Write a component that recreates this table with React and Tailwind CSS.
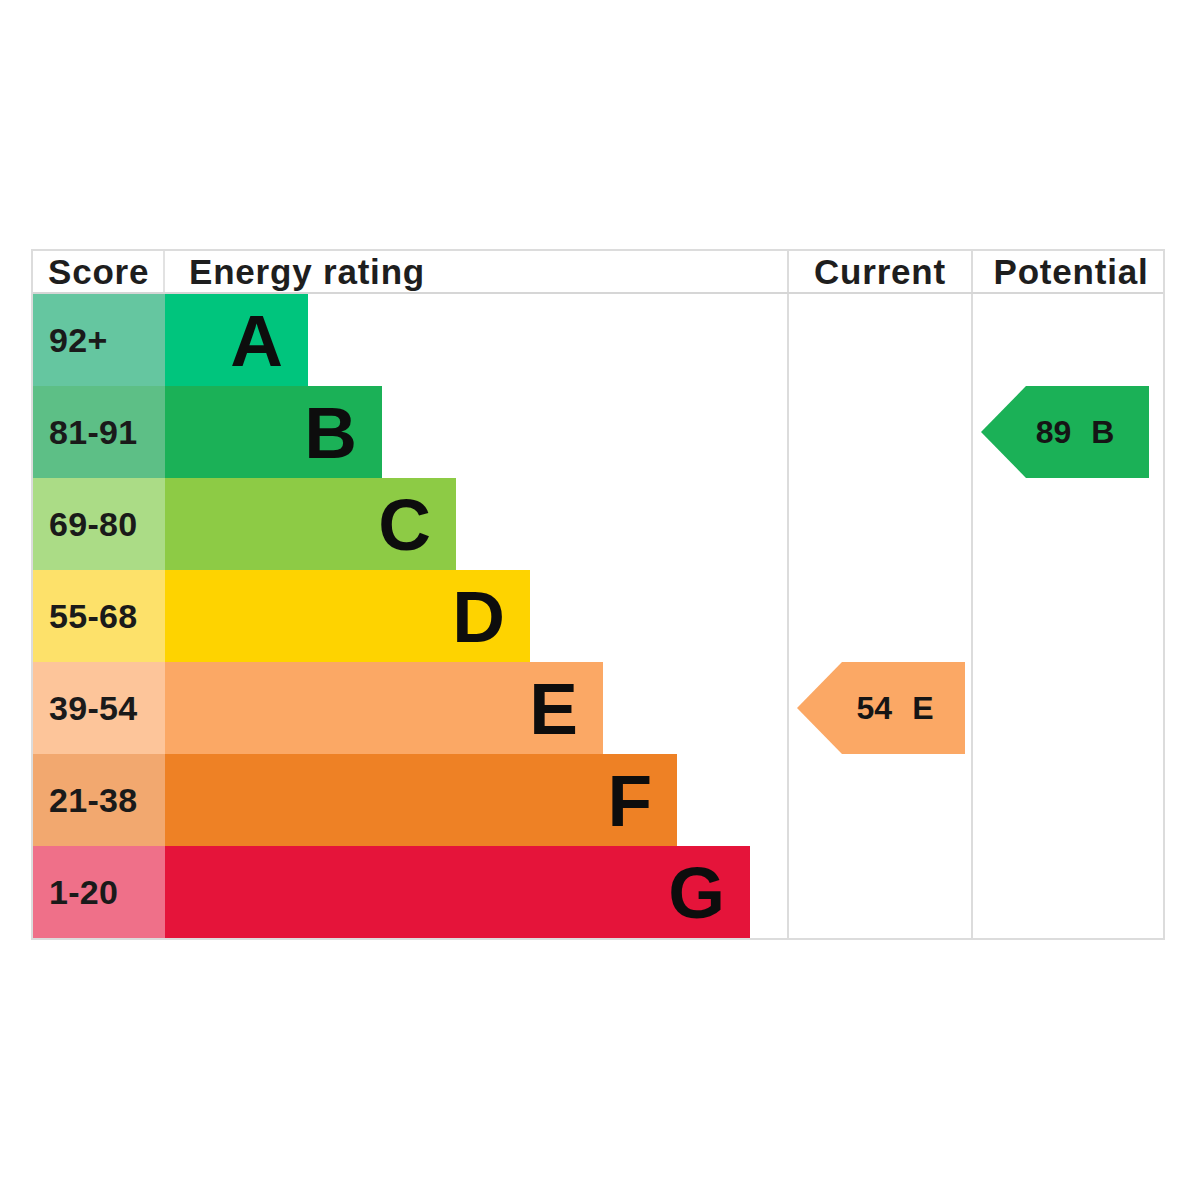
import React from 'react';

const rows = [
  { score: '92+', letter: 'A', width: 'w-[143px]', bar: 'bg-[#00c57d]', cell: 'bg-[#65c6a0]' },
  { score: '81-91', letter: 'B', width: 'w-[217px]', bar: 'bg-[#1bb157]', cell: 'bg-[#5dbf86]' },
  { score: '69-80', letter: 'C', width: 'w-[291px]', bar: 'bg-[#8dcb45]', cell: 'bg-[#abdc86]' },
  { score: '55-68', letter: 'D', width: 'w-[365px]', bar: 'bg-[#fed300]', cell: 'bg-[#fde16a]' },
  { score: '39-54', letter: 'E', width: 'w-[438px]', bar: 'bg-[#fba865]', cell: 'bg-[#fdc59a]' },
  { score: '21-38', letter: 'F', width: 'w-[512px]', bar: 'bg-[#ee8125]', cell: 'bg-[#f2a86f]' },
  { score: '1-20', letter: 'G', width: 'w-[585px]', bar: 'bg-[#e5143a]', cell: 'bg-[#ef7089]' },
];

const current = { value: 54, letter: 'E' };
const potential = { value: 89, letter: 'B' };

const Arrow = ({ value, letter, color, pad }) => (
  <div
    className={`ml-[8px] w-[168px] h-[92px] flex items-center justify-center gap-[20px] text-[32px] font-bold text-[#151515] ${color} ${pad} [clip-path:polygon(45px_0,100%_0,100%_100%,45px_100%,0_50%)]`}
  >
    <span>{value}</span>
    <span>{letter}</span>
  </div>
);

const App = () => {
  return (
    <div className="min-h-[1200px] bg-white pt-[249px] pl-[31px] font-['Liberation_Sans',Arial,sans-serif]">
      <div className="w-[1134px] border-2 border-[#dcdcdc] flex flex-col">
        {/* Header */}
        <div className="flex h-[43px] border-b-2 border-[#d6d6d6] text-[35px] font-bold text-[#1e1e1e] leading-none tracking-[0.8px]">
          <div className="w-[132px] flex items-center pl-[15px] border-r-2 border-[#e2e2e2]">Score</div>
          <div className="w-[622px] flex items-center pl-[24px]">Energy rating</div>
          <div className="w-[184px] flex items-center justify-center border-l-2 border-[#dcdcdc]">Current</div>
          <div className="w-[192px] flex items-center justify-center pl-[6px] border-l-2 border-[#dcdcdc]">Potential</div>
        </div>

        {/* Rows */}
        {rows.map((row) => (
          <div key={row.letter} className="flex h-[92px]">
            <div className={`w-[132px] flex items-center pl-[16px] text-[34px] font-bold text-[#1a1a1a] tracking-[0.3px] ${row.cell}`}>
              {row.score}
            </div>
            <div className="w-[622px] flex">
              <div
                className={`${row.width} ${row.bar} h-full flex items-center justify-end pr-[25px] text-[73px] font-bold text-[#0d0d0d] leading-none`}
              >
                {row.letter}
              </div>
            </div>
            <div className="w-[184px] flex items-center border-l-2 border-[#dcdcdc]">
              {row.letter === current.letter && (
                <Arrow value={current.value} letter={current.letter} color="bg-[#fba865]" pad="pl-[28px]" />
              )}
            </div>
            <div className="w-[192px] flex items-center border-l-2 border-[#dcdcdc]">
              {row.letter === potential.letter && (
                <Arrow value={potential.value} letter={potential.letter} color="bg-[#1bb157]" pad="pl-[20px]" />
              )}
            </div>
          </div>
        ))}
      </div>
    </div>
  );
};

export default App;
